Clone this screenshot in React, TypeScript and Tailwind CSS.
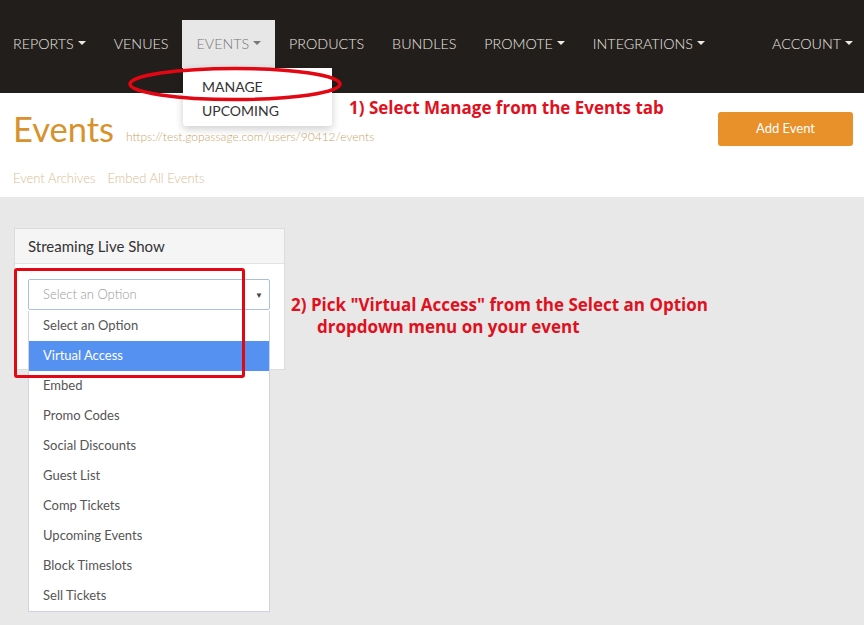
import React from 'react';

const navItems = [
  { label: 'REPORTS', caret: true },
  { label: 'VENUES' },
  { label: 'EVENTS', caret: true, active: true },
  { label: 'PRODUCTS' },
  { label: 'BUNDLES' },
  { label: 'PROMOTE', caret: true },
  { label: 'INTEGRATIONS', caret: true },
];

const options = [
  'Select an Option',
  'Virtual Access',
  'Embed',
  'Promo Codes',
  'Social Discounts',
  'Guest List',
  'Comp Tickets',
  'Upcoming Events',
  'Block Timeslots',
  'Sell Tickets',
];

function Caret() {
  return <span className="inline-block ml-[4px] mb-[2px] border-x-[4px] border-t-[4px] border-x-transparent border-t-current align-middle" />;
}

export default function App() {
  return (
    <div className="relative w-[864px] h-[625px] overflow-hidden bg-[#e8e8e8] font-['Lato','Liberation_Sans',sans-serif]">
      {/* Top nav */}
      <nav className="h-[93px] bg-[#221e1b] flex items-start pt-[20px] pr-[11px]">
        {navItems.map((item) => (
          <div
            key={item.label}
            className={`h-[48px] px-[14px] flex items-center text-[14.3px] font-light ${item.active ? 'bg-[#e7e7e7] text-[#777]' : 'text-[#ebe7e1]'} ${item.label === 'REPORTS' ? 'pl-[13px]' : ''}`}
          >
            {item.label}
            {item.caret && <Caret />}
          </div>
        ))}
        <div className="ml-auto h-[48px] flex items-center text-[14.3px] font-light text-[#ebe7e1]">
          ACCOUNT
          <Caret />
        </div>
      </nav>

      {/* Page header */}
      <div className="bg-white h-[104px] px-[13px] pt-[14px]">
        <div className="flex items-start">
          <div className="flex items-end">
            <h1 className="text-[34.5px] leading-[44px] text-[#d8922c]">Events</h1>
            <span className="ml-[12px] mb-[5px] text-[12px] font-light text-[#c9a66c]">https://test.gopassage.com/users/90412/events</span>
          </div>
          <button className="ml-auto mr-[-2px] mt-[5px] w-[135px] h-[34px] rounded-[3px] bg-[#e8902a] text-white text-[13px]">
            Add Event
          </button>
        </div>
        <div className="mt-[18px] flex gap-[12px] text-[13px] font-light text-[#d9bd94]">
          <span>Event Archives</span>
          <span>Embed All Events</span>
        </div>
      </div>

      {/* Content */}
      <div className="pt-[31px] pl-[14px]">
        <div className="w-[271px] h-[142px] bg-white border border-[#dcdcdc]">
          <div className="h-[35px] bg-[#f5f5f5] border-b border-[#e2e2e2] px-[13px] flex items-center text-[15px] text-[#333]">
            Streaming Live Show
          </div>
          <div className="relative px-[13px] pt-[15px]">
            <div className="h-[31px] w-[242px] border border-[#aac0de] rounded-[2px] flex items-center pl-[14px] pr-[6px] text-[13px] font-light text-[#999]">
              <span className="flex-1">Select an Option</span>
              <span className="text-[#444] text-[8px]">▼</span>
            </div>
          </div>
        </div>
      </div>

      {/* Open select list */}
      <ul className="absolute left-[28px] top-[311px] w-[242px] bg-white border-x border-b border-[#cfd2e2]">
        {options.map((o, i) => (
          <li
            key={o}
            className={`h-[30px] flex items-center pl-[14px] text-[13px] ${i === 1 ? 'bg-[#5591f0] text-white' : 'text-[#555]'}`}
          >
            {o}
          </li>
        ))}
      </ul>

      {/* Events dropdown menu */}
      <div className="absolute left-[183px] top-[68px] w-[149px] h-[58px] bg-white rounded-b-[3px] shadow-[0_3px_8px_rgba(0,0,0,0.2)] pt-[6px]">
        <div className="h-[24px] pl-[19px] flex items-center text-[14px] text-[#333]">MANAGE</div>
        <div className="h-[24px] pl-[19px] flex items-center text-[14px] text-[#333]">UPCOMING</div>
      </div>

      {/* Annotations */}
      <svg className="absolute left-[126px] top-[64px]" width="218" height="40" viewBox="0 0 218 40">
        <ellipse cx="109" cy="20" rx="105" ry="15.5" fill="none" stroke="#e30613" strokeWidth="3.5" />
      </svg>
      <div className="absolute left-[349px] top-[96px] text-[17px] font-bold text-[#e0101e] font-['Open_Sans','DejaVu_Sans',sans-serif] leading-[24px]">
        1) Select Manage from the Events tab
      </div>

      <div className="absolute left-[14px] top-[268px] w-[231px] h-[110px] border-[3px] border-[#e30613] rounded-[3px]" />
      <div className="absolute left-[291px] top-[294px] text-[17px] font-bold text-[#e0101e] font-['Open_Sans','DejaVu_Sans',sans-serif] leading-[22px]">
        <div>2) Pick "Virtual Access" from the Select an Option</div>
        <div className="pl-[26px]">dropdown menu on your event</div>
      </div>
    </div>
  );
}
